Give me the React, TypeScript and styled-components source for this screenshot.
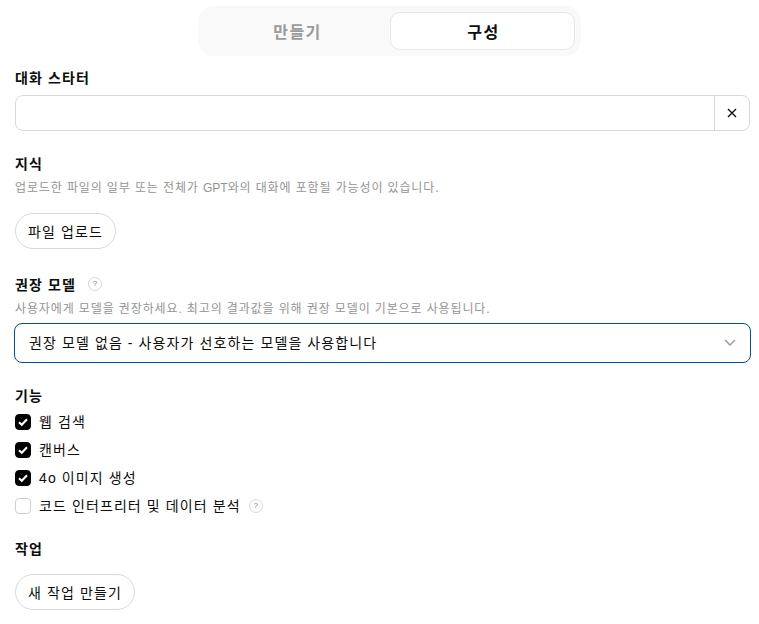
import React from 'react';
import styled, { createGlobalStyle } from 'styled-components';

const GlobalStyle = createGlobalStyle`
  html, body {
    margin: 0;
    padding: 0;
    background: #fff;
    color: #0d0d0d;
    font-family: "Liberation Sans", "Noto Sans CJK KR", sans-serif;
    font-size: 14px;
    letter-spacing: 1.1px;
  }
  * { box-sizing: border-box; }
`;

const Page = styled.div`
  width: 759px;
  height: 624px;
  overflow: hidden;
  padding: 6px 9px 0 15px;
`;

const TabsRow = styled.div`
  display: flex;
  justify-content: center;
  padding-left: 14px;
  margin-bottom: 12px;
`;

const Tabs = styled.div`
  width: 383px;
  height: 50px;
  padding: 6px;
  display: grid;
  grid-template-columns: 1fr 1fr;
  gap: 1px;
  background: #f9f9f9;
  border-radius: 16px;
`;

const Tab = styled.div<{ $active?: boolean }>`
  display: flex;
  align-items: center;
  justify-content: center;
  padding-left: 2px;
  font-size: 16px;
  font-weight: 700;
  letter-spacing: 1.5px;
  border-radius: 10px;
  color: ${p => (p.$active ? '#0d0d0d' : '#9b9b9b')};
  background: ${p => (p.$active ? '#fff' : 'transparent')};
  border: ${p => (p.$active ? '1px solid #e8e8e8' : 'none')};
`;

const Section = styled.section<{ $gap?: number }>`
  margin-bottom: ${p => p.$gap ?? 0}px;
`;

const Label = styled.div`
  display: flex;
  align-items: center;
  height: 20px;
  font-size: 14px;
  font-weight: 700;
  line-height: 20px;
`;

const Hint = styled.div`
  height: 20px;
  margin-top: 4px;
  font-size: 12px;
  line-height: 20px;
  letter-spacing: 0.88px;
  color: #949494;
`;

const Latin = styled.span`
  letter-spacing: 0;
`;

const InputGroup = styled.div`
  display: flex;
  height: 36px;
  margin-top: 7px;
  border: 1px solid #d9d9d9;
  border-radius: 8px;
`;

const TextInput = styled.div`
  flex: 1;
`;

const ClearBox = styled.div`
  width: 35px;
  display: flex;
  align-items: center;
  justify-content: center;
  border-left: 1px solid #d9d9d9;
`;

const PillButton = styled.button`
  display: inline-flex;
  align-items: center;
  height: 36px;
  padding: 0 12px;
  background: #fff;
  border: 1px solid #d9d9d9;
  border-radius: 18px;
  color: #0d0d0d;
  font: inherit;
  letter-spacing: inherit;
`;

const ButtonSlot = styled.div`
  margin-top: 15px;
`;

const HelpIcon = styled.span<{ $left: number; $top: number }>`
  display: inline-flex;
  align-items: center;
  justify-content: center;
  width: 14px;
  height: 14px;
  margin-left: ${p => p.$left}px;
  margin-top: ${p => p.$top}px;
  border: 1px solid #d9d9d9;
  border-radius: 50%;
  color: #7a7a7a;
  font-size: 8px;
  font-weight: 400;
  letter-spacing: 0;
`;

const SelectBox = styled.div`
  display: flex;
  align-items: center;
  justify-content: space-between;
  width: 737px;
  height: 40px;
  margin-top: 4px;
  margin-left: -1px;
  padding: 0 13px 2px 14px;
  border: 1px solid #00509e;
  border-radius: 8px;
`;

const CheckList = styled.div`
  display: flex;
  flex-direction: column;
  margin-top: 1px;
`;

const CheckRow = styled.div`
  display: flex;
  align-items: center;
  gap: 8px;
  height: 28px;
`;

const CheckBox = styled.span<{ $checked?: boolean }>`
  display: flex;
  align-items: center;
  justify-content: center;
  width: 16px;
  height: 16px;
  margin-top: 2px;
  border-radius: 4px;
  background: ${p => (p.$checked ? '#000' : '#fff')};
  border: 1px solid ${p => (p.$checked ? '#000' : '#cfcfcf')};
`;

const features = [
  { name: '웹 검색', checked: true },
  { name: '캔버스', checked: true },
  { name: '4o 이미지 생성', checked: true },
  { name: '코드 인터프리터 및 데이터 분석', checked: false, help: true },
];

const App = () => {
  return (
    <Page>
      <GlobalStyle />
      <TabsRow>
        <Tabs>
          <Tab>만들기</Tab>
          <Tab $active>구성</Tab>
        </Tabs>
      </TabsRow>

      <Section $gap={23}>
        <Label>대화 스타터</Label>
        <InputGroup>
          <TextInput />
          <ClearBox>
            <svg width="12" height="12" viewBox="0 0 12 12" fill="none" stroke="#0d0d0d" strokeWidth="1.3">
              <path d="M2 2l8 8M10 2l-8 8" />
            </svg>
          </ClearBox>
        </InputGroup>
      </Section>

      <Section $gap={26}>
        <Label>지식</Label>
        <Hint>업로드한 파일의 일부 또는 전체가 <Latin>GPT</Latin>와의 대화에 포함될 가능성이 있습니다.</Hint>
        <ButtonSlot>
          <PillButton>파일 업로드</PillButton>
        </ButtonSlot>
      </Section>

      <Section $gap={23}>
        <Label>
          권장 모델
          <HelpIcon $left={12} $top={-2}>?</HelpIcon>
        </Label>
        <Hint>사용자에게 모델을 권장하세요. 최고의 결과값을 위해 권장 모델이 기본으로 사용됩니다.</Hint>
        <SelectBox>
          권장 모델 없음 - 사용자가 선호하는 모델을 사용합니다
          <svg width="14" height="14" viewBox="0 0 14 14" fill="none" stroke="#9b9b9b" strokeWidth="1.5">
            <path d="M2 5l5 5 5-5" />
          </svg>
        </SelectBox>
      </Section>

      <Section $gap={20}>
        <Label>기능</Label>
        <CheckList>
          {features.map(f => (
            <CheckRow key={f.name}>
              <CheckBox $checked={f.checked}>
                {f.checked && (
                  <svg width="10" height="10" viewBox="0 0 10 10" fill="none" stroke="#fff" strokeWidth="2">
                    <path d="M1 5.2l2.8 2.6L9 2.2" />
                  </svg>
                )}
              </CheckBox>
              <span>{f.name}</span>
              {f.help && <HelpIcon $left={0} $top={1}>?</HelpIcon>}
            </CheckRow>
          ))}
        </CheckList>
      </Section>

      <Section>
        <Label>작업</Label>
        <ButtonSlot>
          <PillButton>새 작업 만들기</PillButton>
        </ButtonSlot>
      </Section>
    </Page>
  );
};

export default App;
